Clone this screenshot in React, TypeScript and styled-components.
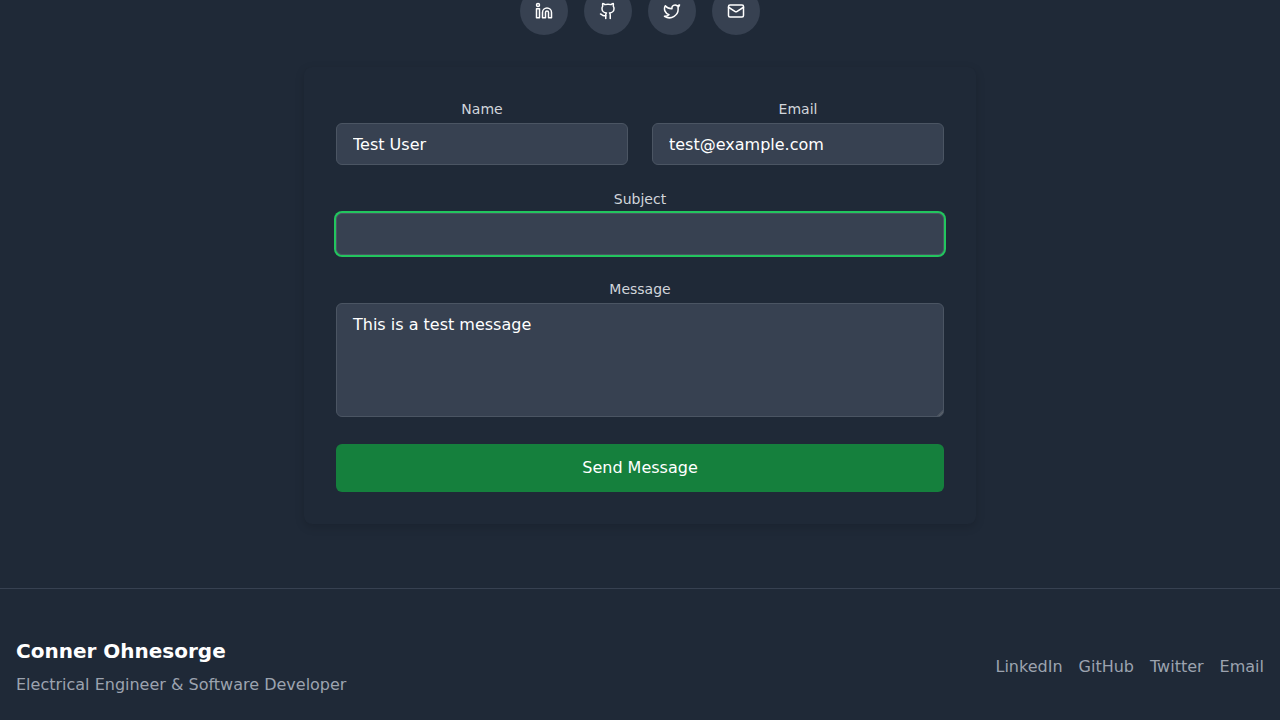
import React from "react";
import styled, { createGlobalStyle } from "styled-components";
import { Github, Linkedin, Mail, Twitter } from "lucide-react";

const GlobalStyle = createGlobalStyle`
  *, *::before, *::after { box-sizing: border-box; }
  body {
    margin: 0;
    background: #1f2937;
    color: #ffffff;
    font-family: "DejaVu Sans", sans-serif;
    font-size: 16px;
    line-height: 24px;
  }
`;

const Page = styled.div`
  height: 720px;
  overflow: hidden;
`;

const Contact = styled.section`
  display: flex;
  flex-direction: column;
  align-items: center;
  margin-top: -13px;
  padding-bottom: 64px;
  text-align: center;
`;

const SocialList = styled.div`
  display: flex;
  gap: 16px;
  margin-bottom: 32px;
`;

const SocialLink = styled.a`
  display: flex;
  align-items: center;
  justify-content: center;
  width: 48px;
  height: 48px;
  border-radius: 50%;
  background: #374151;
  color: #ffffff;
`;

const Card = styled.form`
  display: flex;
  flex-direction: column;
  gap: 24px;
  width: 672px;
  padding: 32px;
  border-radius: 8px;
  background: #1f2937;
  box-shadow: 0 3px 10px rgba(0, 0, 0, 0.15);
`;

const FieldRow = styled.div`
  display: grid;
  grid-template-columns: 1fr 1fr;
  gap: 24px;
`;

const Field = styled.div<{ $spaceAfter?: number }>`
  display: flex;
  flex-direction: column;
  padding-bottom: ${({ $spaceAfter = 0 }) => $spaceAfter}px;
`;

const Label = styled.label`
  margin-bottom: 4px;
  font-size: 14px;
  line-height: 20px;
  color: #d1d5db;
`;

const Input = styled.input<{ $active?: boolean }>`
  width: 100%;
  height: 42px;
  padding: 8px 16px;
  border: 1px solid #4b5563;
  border-radius: 6px;
  outline: none;
  background: #374151;
  color: #ffffff;
  font: inherit;
  box-shadow: ${({ $active }) => ($active ? "0 0 0 2px #22c55e" : "none")};
`;

const TextAreaFrame = styled.div`
  position: relative;
  display: flex;
`;

const TextArea = styled.textarea`
  width: 100%;
  height: 114px;
  padding: 9px 16px 7px;
  border: 1px solid #4b5563;
  border-radius: 6px;
  outline: none;
  resize: none;
  background: #374151;
  color: #ffffff;
  font: inherit;
`;

const ResizeGrip = styled.svg`
  position: absolute;
  right: 1px;
  bottom: 1px;
  pointer-events: none;
`;

const SubmitButton = styled.button`
  height: 48px;
  padding: 12px 24px;
  border: 0;
  border-radius: 6px;
  background: #15803d;
  color: #ffffff;
  font: inherit;
`;

const Footer = styled.footer`
  display: flex;
  align-items: center;
  justify-content: space-between;
  padding: 48px 16px;
  border-top: 1px solid #374151;
`;

const OwnerName = styled.h3`
  margin: 0 0 8px;
  font-size: 20px;
  line-height: 28px;
  font-weight: 700;
`;

const OwnerRole = styled.p`
  margin: 0;
  color: #9ca3af;
`;

const FooterNav = styled.nav`
  display: flex;
  gap: 16px;
`;

const FooterLink = styled.a`
  color: #9ca3af;
`;

const socials = [
  { label: "LinkedIn", Icon: Linkedin },
  { label: "GitHub", Icon: Github },
  { label: "Twitter", Icon: Twitter },
  { label: "Email", Icon: Mail },
];

export default function App() {
  return (
    <Page>
      <GlobalStyle />
      <Contact>
        <SocialList>
          {socials.map(({ label, Icon }) => (
            <SocialLink key={label} aria-label={label}>
              <Icon size={18} />
            </SocialLink>
          ))}
        </SocialList>
        <Card>
          <FieldRow>
            <Field>
              <Label htmlFor="name">Name</Label>
              <Input id="name" defaultValue="Test User" />
            </Field>
            <Field>
              <Label htmlFor="email">Email</Label>
              <Input id="email" type="email" defaultValue="test@example.com" />
            </Field>
          </FieldRow>
          <Field>
            <Label htmlFor="subject">Subject</Label>
            <Input id="subject" $active />
          </Field>
          <Field $spaceAfter={3}>
            <Label htmlFor="message">Message</Label>
            <TextAreaFrame>
              <TextArea id="message" defaultValue="This is a test message" />
              <ResizeGrip width="6" height="6" viewBox="0 0 6 6" aria-hidden="true">
                <path d="M0 6 6 0v3L3 6z" fill="#59616b" />
                <path d="M1 6 6 1" stroke="#4a525e" strokeWidth="0.8" />
              </ResizeGrip>
            </TextAreaFrame>
          </Field>
          <SubmitButton type="button">Send Message</SubmitButton>
        </Card>
      </Contact>
      <Footer>
        <div>
          <OwnerName>Conner Ohnesorge</OwnerName>
          <OwnerRole>Electrical Engineer &amp; Software Developer</OwnerRole>
        </div>
        <FooterNav>
          {socials.map(({ label }) => (
            <FooterLink key={label}>{label}</FooterLink>
          ))}
        </FooterNav>
      </Footer>
    </Page>
  );
}
